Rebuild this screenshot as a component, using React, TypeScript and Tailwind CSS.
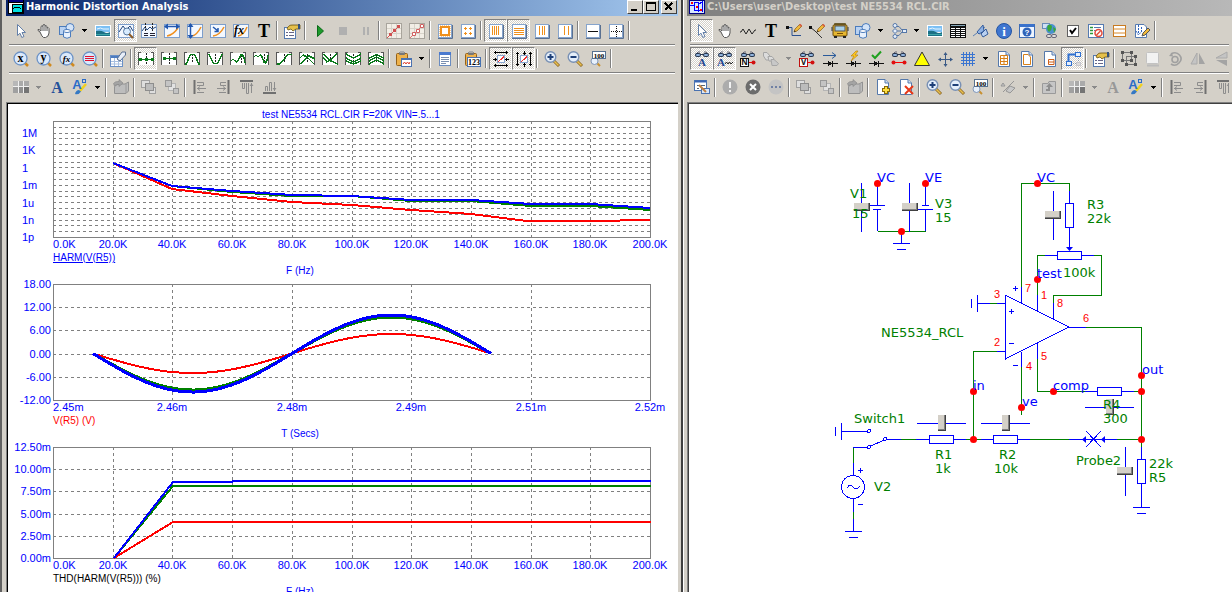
import React from 'react';

interface Tool {
  icon: string;
  label: string;
  pressed?: boolean;
  menu?: boolean;
  dim?: boolean;
}

type ToolItem = Tool | '|';

const BLUE = '#0000ff';
const GREEN = '#008000';
const RED = '#ff0000';
const GRAY = '#808080';

/* ---------- icons ---------- */

function Glasses() {
  return (
    <g>
      <path d="M2 3L4 1H6M14 3L12 1H10" fill="none" stroke="#667" />
      <rect x="1" y="2" width="6" height="4" rx="2" fill="#26364f" />
      <rect x="9" y="2" width="6" height="4" rx="2" fill="#26364f" />
      <path d="M6 3.5H10" stroke="#26364f" />
      <rect x="2" y="3" width="4" height="2" rx="1" fill="#8fb2dc" />
      <rect x="10" y="3" width="4" height="2" rx="1" fill="#8fb2dc" />
    </g>
  );
}

function PlotFrame({ children }: { children?: React.ReactNode }) {
  return (
    <g>
      <rect x="0.5" y="1.5" width="15" height="13" fill="#f3f8ff" stroke="#7d9ecb" />
      {children}
    </g>
  );
}

function OrangeFrame({ children }: { children?: React.ReactNode }) {
  return (
    <g>
      <path d="M1 15.5H15.5V2" stroke="#5a7090" fill="none" />
      <rect x="1.5" y="1.5" width="13" height="13" fill="#fff" stroke="#86a4cc" />
      {children}
    </g>
  );
}

function Lens({ children }: { children?: React.ReactNode }) {
  return (
    <g>
      <path d="M11 11L15 15" stroke="#d08a20" strokeWidth="2.5" />
      <circle cx="7.5" cy="7.5" r="6.5" fill="#dbe9fb" stroke="#6d93c6" strokeWidth="1.3" />
      {children}
    </g>
  );
}

function SmallLens({ children }: { children?: React.ReactNode }) {
  return (
    <g>
      <path d="M10 10L15 15" stroke="#8a6420" strokeWidth="3" />
      <path d="M10 10L14.5 14.5" stroke="#e8c050" strokeWidth="1.6" />
      <circle cx="6.5" cy="6" r="5.3" fill="#e4eefa" stroke="#7890b4" strokeWidth="1.4" />
      {children}
    </g>
  );
}

function Wave({ d, mark = 'M8.5 3V12' }: { d: string; mark?: string }) {
  return (
    <g shapeRendering="crispEdges">
      <rect x="0" y="2" width="16" height="12" fill="#fff" />
      <path d="M0.5 1V14M15.5 2V14" stroke="#555" />
      <path d="M0 1.5H3M13 1.5H16" stroke="#555" />
      <path d={mark} stroke="#222" strokeDasharray="2 1" />
      <path d={d} stroke="#0a7a1a" strokeWidth="1.4" fill="none" />
    </g>
  );
}

function Page({ children }: { children?: React.ReactNode }) {
  return (
    <g>
      <path d="M2.5 0.5H10L13.5 4V15.5H2.5Z" fill="#fff" stroke="#5579ab" />
      <path d="M10 0.5V4H13.5" fill="#cfe0f6" stroke="#5579ab" />
      {children}
    </g>
  );
}

function Pencil() {
  return (
    <g>
      <path d="M8 9L9 6L14 1L16 3L11 8Z" fill="#f0b93a" stroke="#8a5a10" strokeWidth="0.7" />
      <path d="M13 2L14.5 0.7L16 2.5L15 4Z" fill="#d8604a" />
      <path d="M8 9L8.6 7.2L9.8 8.4Z" fill="#222" />
    </g>
  );
}

function Clipboard({ children }: { children?: React.ReactNode }) {
  return (
    <g>
      <rect x="0.5" y="2.5" width="11" height="12" rx="1" fill="#eeb24c" stroke="#94611a" />
      <rect x="3" y="1" width="6" height="3" rx="1" fill="#777" />
      <rect x="4" y="0" width="4" height="2" fill="#aaa" />
      {children}
    </g>
  );
}

function Diode() {
  return (
    <g shapeRendering="crispEdges">
      <path d="M1 12.5H16" stroke="#111" />
      <path d="M6 9.5V15.5L10 12.5Z" fill="#111" />
      <path d="M10.5 9.5V15.5" stroke="#111" />
    </g>
  );
}

function BoxedLetter({ letter, color }: { letter: string; color: string }) {
  return (
    <g>
      <Glasses />
      <rect x="0.5" y="7.5" width="8" height="8" fill="#fff" stroke={color} />
      <text x="4.5" y="14" fontSize="8" fontWeight="bold" textAnchor="middle" fill="#111">
        {letter}
      </text>
      <path d="M9 11.5H13" stroke={RED} />
      <circle cx="13.5" cy="11.5" r="2" fill="#d01010" />
    </g>
  );
}

const ICONS: Record<string, React.ReactNode> = {
  cursor: <path d="M4.5 1.5V12.5L7 10.2L8.8 14.5L11 13.5L9 9.5H12.5Z" fill="#fff" stroke="#6480a8" />,
  hand: (
    <g>
      <path
        d="M4 9L2 7.5Q1.5 6 3 6.5L5 8V3.5Q6 2 7 3.5V2Q8 1 9 2V3Q10 2 11 3.5V5Q12.5 4 13 5.5V10Q12.5 14 9.5 14.5H7.5Q6 14 4 9Z"
        fill="#fff"
        stroke="#555"
      />
      <path d="M7 3.5V8M9 3V8M11 4.5V8" stroke="#555" fill="none" />
    </g>
  ),
  shapes: (
    <g stroke="#4c7cbc">
      <rect x="0.5" y="3.5" width="8" height="8" fill="#b9d2f2" />
      <circle cx="11" cy="4.5" r="4" fill="#d4e4f8" />
      <path d="M4.5 8V14Q8 16.5 11.5 14V8Z" fill="#e8f1fd" />
      <ellipse cx="8" cy="8" rx="3.5" ry="1.5" fill="#fff" />
    </g>
  ),
  image: (
    <g>
      <rect x="0" y="2" width="16" height="12" fill="#fff" />
      <rect x="1" y="3" width="14" height="6" fill="#7cc0f4" />
      <path d="M1 8Q6 7 9 9T15 9V13H1Z" fill="#1b7086" />
      <path d="M2 6Q6 4 8 6H14" stroke="#e8f6ff" fill="none" />
      <path d="M1 11.5H15" stroke="#3ea6a8" />
    </g>
  ),
  plotZoom: (
    <PlotFrame>
      <path d="M1 9L5 3L8 7L12 3L15 8" fill="none" stroke="#24477c" />
      <circle cx="9" cy="8.5" r="3.5" fill="#d8ecff" stroke="#55779f" />
      <path d="M11 11L15 15" stroke="#8c5a24" strokeWidth="2" />
    </PlotFrame>
  ),
  plotCursor: (
    <PlotFrame>
      <path d="M1 8L4 4L6 7L9 4L11 6L15 4" fill="none" stroke="#24477c" />
      <path d="M4.5 0V9M11.5 0V9" stroke="#222" strokeDasharray="2 1" />
      <path d="M3 10.5H7M9 10.5H14M3 12.5H7M9 12.5H14" stroke="#223" />
    </PlotFrame>
  ),
  plotH: (
    <PlotFrame>
      <path d="M3 13Q9 12 14 5" fill="none" stroke="#f09020" strokeWidth="1.5" />
      <path d="M1 3.5H15" fill="none" stroke="#2258b0" strokeWidth="1.5" />
      <path d="M0 3.5L4 0.5V6.5ZM16 3.5L12 0.5V6.5Z" fill="#2258b0" />
    </PlotFrame>
  ),
  plotV: (
    <PlotFrame>
      <path d="M5 13Q10 12 14 4" fill="none" stroke="#f09020" strokeWidth="1.5" />
      <path d="M3.5 1V15" fill="none" stroke="#2258b0" strokeWidth="1.5" />
      <path d="M3.5 0L0.5 4H6.5ZM3.5 16L0.5 12H6.5Z" fill="#2258b0" />
    </PlotFrame>
  ),
  plotArrow: (
    <PlotFrame>
      <path d="M3 13Q10 12 14 4" fill="none" stroke="#f09020" strokeWidth="1.5" />
      <path d="M3 4L8 8M8 5V8.500H4.500" fill="none" stroke="#2258b0" strokeWidth="1.5" />
    </PlotFrame>
  ),
  plotFx: (
    <PlotFrame>
      <path d="M5 13Q11 12 14 4" fill="none" stroke="#f09020" strokeWidth="1.5" />
      <text x="1" y="11" fontSize="12" fontStyle="italic" fontWeight="bold" fontFamily="Liberation Serif, serif">
        fx
      </text>
    </PlotFrame>
  ),
  text: (
    <text x="8" y="14" fontSize="18" fontWeight="bold" textAnchor="middle" fontFamily="Liberation Serif, serif">
      T
    </text>
  ),
  props: (
    <g>
      <rect x="0.5" y="4.5" width="11" height="11" fill="#fff" stroke="#557ab0" />
      <path d="M2 9.5H4M5 9.5H10M2 12.5H4M5 12.5H10" stroke="#668" />
      <path d="M3 5Q6 1 9 2H16V6H12L9 8L7 6L4 7Z" fill="#e5c04a" stroke="#6a5210" strokeWidth="0.8" />
      <rect x="14" y="1" width="2" height="5" fill="#33507c" />
    </g>
  ),
  play: <path d="M5.5 2.5L11.5 8L5.5 13.5Z" fill="#1d9a2c" stroke="#0a6a18" />,
  stop: <rect x="4" y="4" width="8" height="8" fill="#b0b0b0" />,
  pause: <path d="M6 4V12M10 4V12" stroke="#b0b0b0" strokeWidth="2" />,
  redLine: (
    <g>
      <rect x="0.5" y="0.5" width="15" height="15" fill="#f2eee6" stroke="#a8a49c" />
      <path d="M5.5 1V15M10.5 1V15M1 5.5H15M1 10.5H15" stroke="#d8d3ca" />
      <path d="M1 15L5 11L9 7L14 2" stroke="#d85050" fill="none" />
      <path d="M3 10h3v3h-3zM7 6h3v3h-3zM11 2h3v3h-3z" fill="#d05050" />
    </g>
  ),
  redMarks: (
    <g>
      <rect x="0.5" y="0.5" width="15" height="15" fill="#f2eee6" stroke="#a8a49c" />
      <path d="M5.5 1V15M10.5 1V15M1 5.5H15M1 10.5H15" stroke="#d8d3ca" />
      <path d="M1 15L5 11L10 6L14 2" stroke="#e07070" fill="none" />
      <path d="M3.5 9.5h3v3h-3zM7.5 6.5h3v3h-3zM11.5 1.5h3v3h-3z" fill="#fff" stroke="#d06060" />
    </g>
  ),
  orangeRect: (
    <OrangeFrame>
      <rect x="4" y="4" width="8" height="8" fill="#fff" stroke="#f0901c" strokeWidth="2" />
      <rect x="3" y="3" width="10" height="10" fill="none" stroke="#f0901c" strokeWidth="1" strokeDasharray="1 1" />
    </OrangeFrame>
  ),
  orangeDots: (
    <OrangeFrame>
      <path d="M4 5.5H7M5.5 4V7M9 5.5H12M10.5 4V7M4 10.5H7M5.5 9V12M9 10.5H12M10.5 9V12" stroke="#f0901c" />
    </OrangeFrame>
  ),
  bars4: (
    <OrangeFrame>
      <path d="M4.500 3V12M6.500 3V12M8.500 3V12M10.500 3V12" stroke="#f0901c" />
    </OrangeFrame>
  ),
  rows4: (
    <OrangeFrame>
      <path d="M3 5.5H13M3 7.5H13M3 9.5H13M3 11.5H13" stroke="#f0901c" />
    </OrangeFrame>
  ),
  bars3: (
    <OrangeFrame>
      <path d="M5.5 3V12M8.5 3V12M10.5 3V12" stroke="#f0901c" />
    </OrangeFrame>
  ),
  bars2: (
    <OrangeFrame>
      <path d="M7.5 3V12M11.5 3V12" stroke="#f0901c" />
    </OrangeFrame>
  ),
  hline: (
    <OrangeFrame>
      <path d="M3 8.5H13" stroke="#111" />
    </OrangeFrame>
  ),
  dotCross: (
    <OrangeFrame>
      <path d="M3 8.5H14M8.5 3V14" stroke="#111" strokeDasharray="1 1" />
    </OrangeFrame>
  ),
  lensX: (
    <Lens>
      <text x="7.5" y="11" fontSize="12" fontWeight="bold" textAnchor="middle" fontFamily="Liberation Serif, serif">
        x
      </text>
    </Lens>
  ),
  lensY: (
    <Lens>
      <text x="7.5" y="10" fontSize="12" fontWeight="bold" textAnchor="middle" fontFamily="Liberation Serif, serif">
        y
      </text>
    </Lens>
  ),
  lensFx: (
    <Lens>
      <text x="7.5" y="11" fontSize="9" fontWeight="bold" fontStyle="italic" textAnchor="middle" fontFamily="Liberation Serif, serif">
        fx
      </text>
    </Lens>
  ),
  lensRows: (
    <Lens>
      <path d="M3 5.5H12M3 7.5H12M3 9.5H12" stroke="#e01030" />
    </Lens>
  ),
  tableErase: (
    <g>
      <rect x="0.5" y="4.5" width="12" height="11" fill="#fff" stroke="#6a90c6" />
      <path d="M1 6H12" stroke="#4d7cc0" strokeWidth="2" />
      <path d="M4.5 7V15M8.5 7V15M1 10.5H12M1 13H12" stroke="#a9c0e0" />
      <path d="M7 8L12 1H15.5V4L10 10Z" fill="#e8eef8" stroke="#5a6f90" />
    </g>
  ),
  waveA: (
    <g shapeRendering="crispEdges">
      <rect x="0" y="2" width="16" height="12" fill="#fff" />
      <path d="M0.5 1V14M15.5 2V14M0 1.5H3M13 1.5H16" stroke="#555" />
      <path d="M8.5 2V14" stroke="#222" strokeDasharray="2 1" />
      <path d="M0 8.5H16" stroke="#0a7a1a" />
      <path d="M1 7h3v3h-3zM7 7h3v3h-3zM13 7h3v3h-3z" fill="#0a7a1a" />
    </g>
  ),
  waveB: (
    <g shapeRendering="crispEdges">
      <rect x="0" y="2" width="16" height="12" fill="#fff" />
      <path d="M0.5 1V14M15.5 2V14M0 1.5H3M13 1.5H16" stroke="#555" />
      <path d="M8.5 2V14" stroke="#222" strokeDasharray="2 1" />
      <path d="M2 7.5H15" stroke="#0a7a1a" />
      <path d="M2 6h3v3h-3zM12 6h3v3h-3z" fill="#0a7a1a" />
    </g>
  ),
  wavePeak: <Wave d="M1 13H2.500L5.500 5L7 3.500H10L11.500 5L14.500 13H16" />,
  waveValley: <Wave d="M2 3L5 10L7 12.500H10L12 10L15 3" />,
  waveHigh: <Wave d="M1 10L3 8L5 10L7 11L9 8L11 4H12.500L14 7L15 12" mark="M11.5 4V12" />,
  waveLow: <Wave d="M1 6L3 4L5 6L7 4L9 6L11 11L12.500 12L14 9L15 4" mark="M11.5 3V11" />,
  waveInflect: <Wave d="M1 13H4L12 3.500H16" />,
  waveTop: <Wave d="M1 7L4 4L8 6L15 13M1 13L10 5L16 8" />,
  waveBottom: <Wave d="M1 6L5 11L8 9L15 3M1 3L9 10L16 13" />,
  waveDown: <Wave d="M1 3L8.500 7L16 3M1 7L8.500 11L16 7M1 10L8.500 13L16 10" />,
  waveUp: <Wave d="M1 7L8.500 3.500L16 7M1 10L8.500 6L16 10M1 13L8.500 9L16 13" />,
  paste: (
    <Clipboard>
      <rect x="5.5" y="7.5" width="10" height="8" fill="#fff" stroke="#4a72b0" />
      <path d="M6 8.5H15" stroke="#4a72b0" />
      <path d="M7 13L8.5 11L10 13L11.5 11L13 13L14 11" fill="none" stroke="#e04030" />
    </Clipboard>
  ),
  list: (
    <g>
      <rect x="2.5" y="1.5" width="11" height="13" fill="#fff" stroke="#6a8cc0" />
      <rect x="2" y="1" width="12" height="3" fill="#4a7ad0" />
      <path d="M4 6.5H12M4 8.5H12M4 10.5H12M4 12.5H9" stroke="#7a8fb0" />
    </g>
  ),
  paste123: (
    <Clipboard>
      <rect x="2.5" y="6.5" width="13" height="9" fill="#fff" stroke="#4a72b0" />
      <text x="9" y="14" fontSize="8" fontWeight="bold" textAnchor="middle" fontFamily="Liberation Serif, serif">
        123
      </text>
    </Clipboard>
  ),
  scaleX: (
    <g shapeRendering="crispEdges">
      <path d="M1 1.5H15M1 14.5H15M0 8.5H4M12 8.5H16M2.5 0V3M13.5 0V3M2.5 13V16M13.5 13V16M2.5 7V10M13.5 7V10" stroke="#000" />
      <rect x="4.5" y="4.5" width="7" height="7" fill="#fff" stroke="#8aa6d0" />
      <path d="M5 10.5L8 8.5L11 5.5" fill="none" stroke="#f03030" />
    </g>
  ),
  scaleY: (
    <g shapeRendering="crispEdges">
      <path d="M1.5 1V15M14.5 1V15M8.5 0V4M8.5 12V16M0 2.5H3M0 13.5H3M13 2.5H16M13 13.5H16M7 2.5H10M7 13.5H10" stroke="#000" />
      <rect x="4.5" y="4.5" width="7" height="7" fill="#fff" stroke="#8aa6d0" />
      <path d="M5 10.5L8 8.5L11 5.5" fill="none" stroke="#f03030" />
    </g>
  ),
  zoomIn: (
    <SmallLens>
      <path d="M3.5 6H9.5M6.5 3V9" stroke="#1d3f78" strokeWidth="2" />
    </SmallLens>
  ),
  zoomOut: (
    <SmallLens>
      <path d="M3.5 6H9.5" stroke="#1d3f78" strokeWidth="2" />
    </SmallLens>
  ),
  zoom100: (
    <g>
      <path d="M7 12L10 15" stroke="#c89030" strokeWidth="2" />
      <circle cx="4.5" cy="10" r="3.5" fill="#e8f1fc" stroke="#8096b8" />
      <rect x="2.5" y="0.5" width="13" height="7" fill="#fff" stroke="#56708f" />
      <text x="9" y="6.5" fontSize="7" fontWeight="bold" textAnchor="middle" fontFamily="Liberation Serif, serif">
        100
      </text>
    </g>
  ),
  swatch: (
    <g>
      <rect x="0" y="2" width="16" height="12" fill="#f0f0f0" />
      <path d="M0 2h5v5h-5z" fill="#b8b8b8" />
      <path d="M6 2h4v5h-4zM11 2h5v5h-5z" fill="#aaaaaa" />
      <path d="M0 8h5v6h-5z" fill="#a0a0a0" />
      <path d="M6 8h4v6h-4z" fill="#909090" />
      <path d="M11 8h5v6h-5z" fill="#747474" />
    </g>
  ),
  fontA: (
    <text x="8" y="14" fontSize="16" fontWeight="bold" fill="#24509a" textAnchor="middle" fontFamily="Liberation Serif, serif">
      A
    </text>
  ),
  fontAGray: (
    <text x="8" y="14" fontSize="16" fontWeight="bold" fill="#989898" textAnchor="middle" fontFamily="Liberation Serif, serif">
      A
    </text>
  ),
  fontBrush: (
    <g>
      <path d="M14 5L8 12" stroke="#f0d020" strokeWidth="2.5" />
      <path d="M3 15Q4 11 7 11L9 12.500Q7 16 3 15Z" fill="#3478c4" />
      <text x="5" y="10" fontSize="13" fontWeight="bold" fill="#2a6cc8" textAnchor="middle" fontFamily="Liberation Sans, sans-serif">
        A
      </text>
      <rect x="10.5" y="0.5" width="3" height="3" fill="none" stroke="#2a6cc8" />
    </g>
  ),
  importGray: (
    <g>
      <path d="M1.500 7.500L5 5H12L15.500 3V12L13 14.500H1.500Z" fill="#bdbdbd" stroke="#929292" />
      <path d="M13 5V14" stroke="#9a9a9a" />
      <path d="M0.500 4.500Q2 2 6 2.500V0.500L10 4L6 7.500V5.500Q3 5 1.500 7Z" fill="#a4a4a4" stroke="#858585" strokeWidth="0.6" />
    </g>
  ),
  exportGray: (
    <g>
      <path d="M1.5 4.5H7L8 2.5H14.5V14.5H1.5Z" fill="#c6c6c6" stroke="#9a9a9a" />
      <path d="M5 12H9V8H12L8.5 4L5 8H7V10H5Z" fill="#8e8e8e" />
    </g>
  ),
  front: (
    <g stroke="#a0a0a0" fill="#dedede">
      <rect x="0.5" y="1.5" width="8" height="7" />
      <rect x="8.5" y="8.5" width="6" height="6" />
      <rect x="4.5" y="4.5" width="8" height="7" fill="#bcbcbc" stroke="#8d8d8d" />
    </g>
  ),
  back: (
    <g stroke="#989898" fill="#c4c4c4">
      <rect x="4.5" y="4.5" width="7" height="7" fill="#e2e2e2" stroke="#b4b4b4" />
      <rect x="1.5" y="1.5" width="6" height="6" />
      <rect x="9.5" y="9.5" width="5" height="5" />
    </g>
  ),
  alignL: (
    <g fill="none" stroke="#8d8d8d">
      <path d="M2.5 1V15" stroke="#707070" strokeWidth="2" />
      <path d="M5 3.5H11.500V6.500H5M14 9.500H5M8 7.500L5.500 9.500L8 11.500M5 13.500H12" />
    </g>
  ),
  alignR: (
    <g fill="none" stroke="#8d8d8d">
      <path d="M13.5 1V15" stroke="#707070" strokeWidth="2" />
      <path d="M11 3.5H5.500V6.500H11M2 9.500H11M8 7.500L10.500 9.500L8 11.500M11 13.500H4" />
    </g>
  ),
  alignT: (
    <g fill="none" stroke="#8d8d8d">
      <path d="M2 2H15" stroke="#707070" strokeWidth="2" />
      <path d="M4.5 4V9.500H6.500V4M8.500 4V14.500H10.500V4M13.500 14V4M12 7L13.500 5L15 7" />
    </g>
  ),
  alignB: (
    <g fill="none" stroke="#8d8d8d">
      <path d="M2 14H15" stroke="#707070" strokeWidth="2" />
      <path d="M4.5 12V7.500H6.500V12M8.500 12V3.500H10.500V12M13.500 3V12M12 9L13.500 11L15 9" />
    </g>
  ),
  zigzag: <path d="M0 9H1L3 6L6 11L9 6L12 11L15 7H16" fill="none" stroke="#222" />,
  wirePencil: (
    <g>
      <path d="M1 4.5H6V12.5H15" fill="none" stroke="#2a5090" />
      <rect x="0" y="3" width="3" height="3" fill="#111" />
      <Pencil />
    </g>
  ),
  diagPencil: (
    <g>
      <path d="M1 4L6 8L13 15" fill="none" stroke="#333" />
      <rect x="0" y="3" width="3" height="3" fill="#111" />
      <Pencil />
    </g>
  ),
  bus: (
    <g>
      <rect x="2" y="0" width="12" height="3" rx="1" fill="#6a5c30" />
      <rect x="1" y="2" width="14" height="11" rx="1" fill="#e8b830" stroke="#6a4a08" />
      <rect x="3" y="3" width="10" height="5" fill="#a8d0e8" stroke="#555" />
      <path d="M5 10.5H11" stroke="#7a5008" />
      <path d="M2 13h3v2h-3zM11 13h3v2h-3z" fill="#222" />
      <path d="M0 4V8M16 4V8" stroke="#333" />
    </g>
  ),
  flow: (
    <g fill="#e6effb" stroke="#5577a8">
      <path d="M4 6V10M6 3.5H8L11 7M6 12.5H8L11 9M6.500 8H10" fill="none" />
      <circle cx="4" cy="2.500" r="2" />
      <circle cx="4" cy="13.500" r="2" />
      <path d="M4 5.5L6.5 8L4 10.5L1.5 8Z" />
      <rect x="11.5" y="6.5" width="4" height="3" />
    </g>
  ),
  table: (
    <g shapeRendering="crispEdges">
      <rect x="0" y="1" width="16" height="14" fill="#111" />
      <path d="M1 2.5H15" stroke="#8ab" />
      <path d="M1 5.5H15M1 7.5H15M1 9.5H15M1 11.5H15M1 13.5H15" stroke="#fff" />
      <path d="M5.5 3V15M10.5 3V15" stroke="#111" />
    </g>
  ),
  ribbon: (
    <g>
      <path d="M0 13L12 4" stroke="#5a7fb5" />
      <path d="M4 9L10 2L11 8L6 11Z" fill="#8fb2e4" stroke="#345c9c" />
      <path d="M8 11L13 6L15 11L10 14Z" fill="#b9d0f0" stroke="#345c9c" />
    </g>
  ),
  ribbonGray: (
    <g stroke="#969696" fill="#c8c8c8">
      <path d="M3 13L14 2" />
      <path d="M1 7L3 4L5 7ZM6 12L10 7L15 9L10 14Z" />
    </g>
  ),
  info: (
    <g>
      <circle cx="8" cy="8" r="7.5" fill="#3f76d0" stroke="#2455a4" />
      <text x="8" y="13" fontSize="13" fontWeight="bold" fill="#fff" textAnchor="middle" fontFamily="Liberation Serif, serif">
        i
      </text>
    </g>
  ),
  help: (
    <g>
      <rect x="0.5" y="1.5" width="15" height="13" fill="#eef5ff" stroke="#3e6cb4" />
      <rect x="1" y="1" width="14" height="3" fill="#3a72cc" />
      <circle cx="8" cy="9" r="4.5" fill="#2e62b8" />
      <text x="8" y="12" fontSize="8" fontWeight="bold" fill="#fff" textAnchor="middle" fontFamily="Liberation Sans, sans-serif">
        ?
      </text>
    </g>
  ),
  globe: (
    <g>
      <rect x="0.5" y="0.5" width="7" height="5" fill="#cfe0f4" stroke="#6a8cb8" />
      <circle cx="9" cy="6" r="5" fill="#4a90d0" />
      <path d="M6 2Q10 1 10 4T7 9Q4 6 6 2ZM11 4L14 6L12 10Z" fill="#38a838" />
      <rect x="4.5" y="11.5" width="5" height="3" rx="1.5" fill="#ddd" stroke="#667" />
      <rect x="9.5" y="11.5" width="5" height="3" rx="1.5" fill="#ddd" stroke="#667" />
    </g>
  ),
  formX: (
    <g>
      <rect x="0.5" y="1.5" width="15" height="13" fill="#fff" stroke="#557ab0" />
      <path d="M2 4.5H5M2 7.5H5M2 10.5H5" stroke="#2a9a3a" strokeWidth="1.5" />
      <path d="M6 4.5H13M6 7.5H9" stroke="#557ab0" />
      <circle cx="10.5" cy="10" r="3.5" fill="#fff" stroke="#e04a3a" strokeWidth="1.5" />
      <path d="M8.5 12L12.5 8" stroke="#e04a3a" strokeWidth="1.5" />
    </g>
  ),
  orangeRows: (
    <g>
      <rect x="2.5" y="2.5" width="12" height="11" fill="#fff" stroke="#c87a20" />
      <path d="M2 6H15M2 10H15" stroke="#d88a2c" />
    </g>
  ),
  docPencil: (
    <g>
      <path d="M1.5 1.5H10L12.5 4V14.5H1.5Z" fill="#fff" stroke="#557ab0" />
      <path d="M4.5 2V11M7.5 4V9M2 8L4.5 12L8 8" stroke="#2a62c0" strokeDasharray="2 1" fill="none" />
      <path d="M8 13L9 10L14 5L16 7L11 12Z" fill="#f0b93a" stroke="#555" />
    </g>
  ),
  glassA: (
    <g>
      <Glasses />
      <text x="8" y="15" fontSize="11" fontWeight="bold" fill="#1f4690" textAnchor="middle" fontFamily="Liberation Serif, serif">
        A
      </text>
    </g>
  ),
  glassWave: (
    <g>
      <Glasses />
      <text x="4" y="15" fontSize="11" fontWeight="bold" fill="#1f4690" textAnchor="middle" fontFamily="Liberation Serif, serif">
        A
      </text>
      <path d="M8 13L9.5 11L11 13L12.5 11L14 13L16 11" fill="none" stroke="#222" />
    </g>
  ),
  glassN: <BoxedLetter letter="N" color="#111" />,
  glassV: <BoxedLetter letter="V" color="#c01010" />,
  stackGray: (
    <g fill="#dcdcdc" stroke="#a6a6a6">
      <path d="M0.5 1.5H4L7 5L5 6L7 9H3L0.500 5Z" />
      <path d="M5 5.5H9L11 8L9 10H6Z" />
      <path d="M8 8.5H11L15.5 12.500L14 14.5H9Z" fill="#c8c8c8" />
    </g>
  ),
  current: (
    <g>
      <Diode />
      <path d="M1 4.5H14M10 1.5L14 4.5L10 7.5" fill="none" stroke="#2a5a9a" />
    </g>
  ),
  power: (
    <g>
      <Diode />
      <path d="M11 0L6 5H9L6 10L13 4H10L13 0Z" fill="#ffc820" stroke="#b07808" strokeWidth="0.6" />
    </g>
  ),
  condition: (
    <g>
      <Diode />
      <path d="M4 4L7 7L13 0.5" fill="none" stroke="#1fa01f" strokeWidth="2" />
    </g>
  ),
  glassDots: (
    <g>
      <Glasses />
      <path d="M2 11.5H14" stroke={RED} />
      <circle cx="2.5" cy="11.5" r="2" fill="#e01010" />
      <circle cx="13.5" cy="11.5" r="2" fill="#e01010" />
    </g>
  ),
  triangle: <path d="M8 1L15.5 14.5H0.5Z" fill="#ffff00" stroke="#333" />,
  cross: (
    <g>
      <path d="M8.5 2V15M2 8.5H15" stroke="#3a5a86" />
      <path d="M8.5 1L6.500 4H10.500ZM8.500 16L6.500 13H10.500ZM1 8.500L4 6.500V10.500ZM16 8.500L13 6.500V10.500Z" fill="#3a5a86" />
    </g>
  ),
  grid: <path d="M3.5 1V15M6.5 1V15M9.5 1V15M12.5 1V15M1 3.5H15M1 6.5H15M1 9.5H15M1 12.5H15" stroke="#3a74d0" />,
  pageGrid: (
    <Page>
      <path d="M4.5 4.5H11.5V13.5H4.5ZM4 7.5H12M4 10.5H12M8 4V14" fill="none" stroke="#d88018" />
    </Page>
  ),
  page: (
    <Page>
      <path d="M4.5 3.5H9L11.5 6V13.5H4.5Z" fill="none" stroke="#d88018" />
    </Page>
  ),
  pageBox: (
    <Page>
      <path d="M6.5 8.5H12V13.5H6.5ZM7 11H12" fill="none" stroke="#d06018" />
    </Page>
  ),
  nodeMove: (
    <g>
      <path d="M3.5 10V3.5H11" fill="none" stroke="#3070d0" strokeWidth="2" />
      <rect x="10.5" y="1.5" width="5" height="4" fill="#e6effb" stroke="#3070d0" />
      <rect x="1.5" y="10.5" width="5" height="4" fill="#e6effb" stroke="#3070d0" />
      <path d="M8 12.5H12M13.5 7V11" stroke="#89a" strokeDasharray="1 1" />
      <rect x="11.5" y="11.5" width="4" height="3" fill="#ddd" stroke="#aab" strokeDasharray="1 1" />
    </g>
  ),
  selBox: (
    <g fill="none" stroke="#777">
      <rect x="1.5" y="1.5" width="9" height="8" />
      <rect x="5.5" y="5.5" width="9" height="8" />
      <path
        d="M0 0h3v3h-3zM9 0h3v3h-3zM0 8h3v3h-3zM9 8h3v3h-3zM13 4h3v3h-3zM13 12h3v3h-3zM4 12h3v3h-3z"
        fill="#555"
        stroke="none"
      />
    </g>
  ),
  whiteBox: (
    <g>
      <rect x="2.5" y="1.5" width="12" height="11" rx="1" fill="#f2f2f2" stroke="#c2c2c2" />
      <path d="M3 14.5H15" stroke="#bbb" strokeWidth="2" />
    </g>
  ),
  rotate: (
    <g fill="none" stroke="#a0a0a0" strokeWidth="1.6">
      <path d="M4 3Q9 0 12.5 4T12 12T4 13" />
      <circle cx="8" cy="8.5" r="3" />
      <path d="M2 5L5 1.5L6 5.5Z" fill="#a0a0a0" stroke="none" />
    </g>
  ),
  flipH: (
    <g fill="#a4a4a4">
      <path d="M7 2V13H1Z" fill="#c4c4c4" stroke="#aaa" />
      <path d="M9 2V13H15Z" />
    </g>
  ),
  flipV: (
    <g fill="#a4a4a4">
      <path d="M14 7V1L3 7Z" fill="#c4c4c4" stroke="#aaa" />
      <path d="M14 9V15L3 9Z" />
    </g>
  ),
  formPencil: (
    <g>
      <rect x="0.5" y="1.5" width="12" height="10" fill="#fff" stroke="#4a72b0" />
      <path d="M1 2.5H12" stroke="#3a66b4" strokeWidth="2" />
      <path d="M3 6.5H5M7 6.5H11M3 9.5H5" stroke="#567" />
      <rect x="7.5" y="9.5" width="8" height="5" fill="#dbe7f8" stroke="#4a72b0" />
      <path d="M5 6L12 13" stroke="#c08040" strokeWidth="2" />
    </g>
  ),
  exclaim: (
    <g>
      <circle cx="8" cy="8" r="7.5" fill="#acacac" />
      <path d="M8 3V9M8 11V13" stroke="#f2f2f2" strokeWidth="2" />
    </g>
  ),
  xCircle: (
    <g>
      <circle cx="8" cy="8" r="7.5" fill="#6c6c6c" />
      <path d="M5 5L11 11M11 5L5 11" stroke="#fff" strokeWidth="2" />
    </g>
  ),
  dots: (
    <g>
      <circle cx="8" cy="8" r="7.5" fill="#c4c4c4" />
      <path d="M3 7h2v2h-2zM7 7h2v2h-2zM11 7h2v2h-2z" fill="#6f80a4" />
    </g>
  ),
  pageAdd: (
    <Page>
      <path d="M11 7V15M7 11H15" stroke="#8a6a08" strokeWidth="4" />
      <path d="M11 8V14M8 11H14" stroke="#ffe040" strokeWidth="2" />
    </Page>
  ),
  pageDelete: (
    <Page>
      <path d="M7 7L15 15M15 7L7 15" stroke="#e83818" strokeWidth="2" />
    </Page>
  ),
};

function Icon({ name }: { name: string }) {
  return (
    <svg width="16" height="16" viewBox="0 0 16 16" className="shrink-0 overflow-visible" aria-hidden="true">
      {ICONS[name]}
    </svg>
  );
}

/* ---------- toolbars ---------- */

const DITHER = 'bg-[repeating-conic-gradient(#ffffff_0_25%,#d4d0c8_0_50%)] bg-[length:2px_2px]';

function ToolButton({ tool }: { tool: Tool }) {
  const pressed = tool.pressed
    ? `border border-t-[#808080] border-l-[#808080] border-r-white border-b-white ${DITHER}`
    : '';
  return (
    <>
      {tool.icon === 'check' ? (
        <label className="relative flex h-[23px] w-[23px] shrink-0 items-center justify-center">
          <input
            type="checkbox"
            defaultChecked
            aria-label={tool.label}
            className="peer h-3 w-3 appearance-none border border-[#606060] bg-white"
          />
          <svg width="8" height="8" viewBox="0 0 8 8" className="pointer-events-none absolute hidden peer-checked:block">
            <path d="M1 3L3 6L7 1" fill="none" stroke="#000" strokeWidth="2" />
          </svg>
        </label>
      ) : (
        <button
          type="button"
          aria-label={tool.label}
          aria-pressed={tool.pressed}
          className={`flex h-[23px] w-[23px] shrink-0 items-center justify-center ${pressed}`}
        >
          <Icon name={tool.icon} />
        </button>
      )}
      {tool.menu && (
        <button
          type="button"
          aria-label={`${tool.label} options`}
          className="flex h-[23px] w-[13px] shrink-0 items-center justify-center"
        >
          <svg width="5" height="3" viewBox="0 0 5 3" shapeRendering="crispEdges">
            <path d="M0 0H5L2.5 3Z" fill={tool.dim ? '#8a8a8a' : '#000'} />
          </svg>
        </button>
      )}
    </>
  );
}

function Toolbar({ items, label, last }: { items: ToolItem[]; label: string; last?: boolean }) {
  return (
    <div role="toolbar" aria-label={label} className="shrink-0 px-[3px]">
      <div
        className={`flex h-7 items-center overflow-hidden ${
          last ? '' : 'border-b border-[#808080] shadow-[0_1px_0_#ffffff]'
        }`}
      >
        {items.map((item, i) =>
          item === '|' ? (
            <span key={i} className="mr-[2px] ml-px h-[19px] w-[2px] shrink-0 border-r border-l border-r-white border-l-[#808080]" />
          ) : (
            <ToolButton key={i} tool={item} />
          )
        )}
      </div>
    </div>
  );
}

const t = (icon: string, label: string, extra: Partial<Tool> = {}): Tool => ({ icon, label, ...extra });

const analysisMain: ToolItem[] = [
  t('cursor', 'Select'), t('hand', 'Pan'), t('shapes', 'Shapes', { menu: true }), t('image', 'Picture'),
  t('plotZoom', 'Scale mode', { pressed: true }), t('plotCursor', 'Cursor mode'), t('plotH', 'Horizontal tag'),
  t('plotV', 'Vertical tag'), t('plotArrow', 'Point tag'), t('plotFx', 'Formula'), t('text', 'Text'), '|',
  t('props', 'Properties'), '|', t('play', 'Run'), t('stop', 'Stop'), t('pause', 'Pause'), '|',
  t('redLine', 'Tokens'), t('redMarks', 'Data points'), '|', t('orangeRect', 'Ruler'), t('orangeDots', 'Plus marks'), '|',
  t('bars4', 'Horizontal axis grids', { pressed: true }), t('rows4', 'Vertical axis grids', { pressed: true }),
  t('bars3', 'Minor log grids'), t('bars2', 'Minor grids'), '|', t('hline', 'Baseline'), t('dotCross', 'Horizontal cursor'), '|',
];

const analysisCursor: ToolItem[] = [
  t('lensX', 'Go to X'), t('lensY', 'Go to Y'), t('lensFx', 'Go to performance'), t('lensRows', 'Go to branch'), '|',
  t('tableErase', 'Clear table'), '|', t('waveA', 'Next simulation point', { pressed: true }), t('waveB', 'Next interpolated point'),
  t('wavePeak', 'Peak'), t('waveValley', 'Valley'), t('waveHigh', 'High'), t('waveLow', 'Low'), t('waveInflect', 'Inflection'),
  t('waveTop', 'Global high'), t('waveBottom', 'Global low'), t('waveDown', 'Bottom'), t('waveUp', 'Top'), '|',
  t('paste', 'Copy', { menu: true }), '|', t('list', 'Numeric output'), '|', t('paste123', 'Copy values'), '|',
  t('scaleX', 'Auto scale X', { pressed: true }), t('scaleY', 'Auto scale Y', { pressed: true }), '|',
  t('zoomIn', 'Zoom in'), t('zoomOut', 'Zoom out'), t('zoom100', 'Zoom 100%'), '|',
];

const analysisFormat: ToolItem[] = [
  t('swatch', 'Color', { menu: true, dim: true }), t('fontA', 'Font'), t('fontBrush', 'Format', { menu: true }), '|',
  t('importGray', 'Import'), '|', t('front', 'Bring to front'), t('back', 'Send to back'), '|',
  t('alignL', 'Align left'), t('alignR', 'Align right'), t('alignT', 'Align top'), t('alignB', 'Align bottom'),
];

const schematicMain: ToolItem[] = [
  t('cursor', 'Select', { pressed: true }), t('hand', 'Pan'), t('zigzag', 'Component'), t('text', 'Text'),
  t('wirePencil', 'Wire'), t('diagPencil', 'Diagonal wire'), t('bus', 'Bus'), t('shapes', 'Shapes', { menu: true }),
  t('flow', 'Flowchart', { menu: true }), t('image', 'Picture'), t('table', 'Table'), t('ribbon', 'Flag'), t('info', 'Info'),
  t('help', 'Help'), t('globe', 'Link'), t('check', 'Enable'), t('formX', 'Region enable'), t('orangeRows', 'Rows'),
  t('docPencil', 'Edit file'), '|',
];

const schematicView: ToolItem[] = [
  t('glassA', 'Show attributes', { pressed: true }), t('glassWave', 'Show grid text', { pressed: true }),
  t('glassN', 'Node numbers'), t('stackGray', 'Layers', { menu: true, dim: true }), t('glassV', 'Node voltages'),
  t('current', 'Currents'), t('power', 'Power'), t('condition', 'Conditions'), t('glassDots', 'Pin connections'),
  t('triangle', 'Warnings'), t('cross', 'Crosshair'), t('grid', 'Grid', { menu: true }), t('pageGrid', 'Border'),
  t('page', 'Page'), t('pageBox', 'Title block'), t('nodeMove', 'Rubberbanding', { pressed: true }), '|',
  t('props', 'Properties'), '|', t('selBox', 'Box select'), t('whiteBox', 'Mirror box'), t('rotate', 'Rotate'),
  t('flipH', 'Flip horizontal'), t('flipV', 'Flip vertical'),
];

const schematicFormat: ToolItem[] = [
  t('formPencil', 'Edit'), '|', t('exclaim', 'Error'), t('xCircle', 'Cancel'), t('dots', 'More'), '|',
  t('front', 'Bring to front'), t('back', 'Send to back'), '|', t('importGray', 'Import'), '|',
  t('pageAdd', 'Add page'), t('pageDelete', 'Delete page'), '|', t('zoomIn', 'Zoom in'), t('zoomOut', 'Zoom out'),
  t('zoom100', 'Zoom 100%'), '|', t('ribbonGray', 'Flags', { menu: true, dim: true }), '|', t('exportGray', 'Export'), '|',
  t('swatch', 'Color', { menu: true, dim: true }), t('fontAGray', 'Font'), t('fontBrush', 'Format', { menu: true }), '|',
  t('alignL', 'Align left'), t('alignR', 'Align right'), t('alignT', 'Align top'),
];

/* ---------- analysis plots ---------- */

const LEFT = 53;
const RIGHT = 650;
const KHZ_X = [113, 172, 232, 292, 352, 411, 471, 531, 590];
const KHZ_LABELS = ['0.0K', '20.0K', '40.0K', '60.0K', '80.0K', '100.0K', '120.0K', '140.0K', '160.0K', '180.0K', '200.0K'];

interface Trace {
  color: string;
  width: number;
  points: string;
}

interface PlotProps {
  top: number;
  bottom: number;
  rows: number[];
  cols: number[];
  xLabels: string[];
  yLabels: [number, string][];
  yLeft?: boolean;
  traces: Trace[];
  expression: string;
  expressionColor: string;
  underline?: boolean;
  axis: string;
}

function Plot({ top, bottom, rows, cols, xLabels, yLabels, yLeft, traces, expression, expressionColor, underline, axis }: PlotProps) {
  const ticks = [...cols, RIGHT];
  return (
    <g>
      <g stroke={GRAY} fill="none" shapeRendering="crispEdges">
        {rows.map((y) => (
          <path key={y} d={`M${LEFT} ${y + 0.5}H${RIGHT}`} strokeDasharray="3 3" />
        ))}
        {cols.map((x) => (
          <path key={x} d={`M${x + 0.5} ${top}V${bottom}`} strokeDasharray="3 3" />
        ))}
        <path d={`M${LEFT + 0.5} ${top + 0.5}H${RIGHT + 0.5}V${bottom + 0.5}H${LEFT + 0.5}Z`} />
      </g>
      {traces.map((trace) => (
        <polyline
          key={trace.color}
          points={trace.points}
          fill="none"
          stroke={trace.color}
          strokeWidth={trace.width}
          shapeRendering="crispEdges"
        />
      ))}
      <g fill={BLUE} fontSize="11">
        {yLabels.map(([y, label]) => (
          <text key={label} x={yLeft ? 22 : 51} y={y + 4} textAnchor={yLeft ? 'start' : 'end'}>
            {label}
          </text>
        ))}
        <text x={LEFT} y={bottom + 11}>{xLabels[0]}</text>
        {ticks.map((x, i) => (
          <text key={x} x={x} y={bottom + 11} textAnchor="middle">
            {xLabels[i + 1]}
          </text>
        ))}
      </g>
      <text x={LEFT} y={bottom + 24} fontSize="10" fill={expressionColor} textDecoration={underline ? 'underline' : undefined}>
        {expression}
      </text>
      <text x="300" y={bottom + 37} fontSize="10" fill={BLUE} textAnchor="middle">
        {axis}
      </text>
    </g>
  );
}

// one full period, starting on the falling half
function sine(amplitude: number) {
  const points: string[] = [];
  for (let x = 93; x <= 491; x += 3) {
    const y = 353.5 + amplitude * Math.sin(((x - 93) / 398) * Math.PI * 2);
    points.push(`${x},${y.toFixed(1)}`);
  }
  points.push('491,353.5');
  return points.join(' ');
}

const decadeRows = Array.from({ length: 19 }, (_, i) => Math.floor(121.5 + 5.8 * (i + 1)));

function AnalysisCanvas() {
  return (
    <svg
      width="670"
      height="488"
      viewBox="8 104 670 488"
      fontFamily="'Liberation Sans', Arial, sans-serif"
      className="block shrink-0 overflow-visible"
      role="img"
      aria-label="Harmonic distortion plots"
    >
      <text x="351" y="118" fontSize="10" fill={BLUE} textAnchor="middle">
        test NE5534 RCL.CIR F=20K VIN=.5...1
      </text>
      <Plot
        top={121}
        bottom={237}
        rows={decadeRows}
        cols={KHZ_X}
        xLabels={KHZ_LABELS}
        yLeft
        yLabels={[[133, '1M'], [150, '1K'], [168, '1'], [185, '1m'], [203, '1u'], [220, '1n'], [237, '1p']]}
        traces={[
          { color: RED, width: 2, points: '113,163 172,189 232,196 292,202 352,205 411,210 471,214 527,221 590,221 650,220' },
          { color: GREEN, width: 2, points: '113,163 172,186 232,192 292,196 352,196 411,201 471,201 531,206 590,206 650,210' },
          { color: BLUE, width: 2, points: '113,163 172,186 232,191 292,195 352,196 411,200 471,200 531,204 590,204 650,208' },
        ]}
        expression="HARM(V(R5))"
        expressionColor={BLUE}
        underline
        axis="F (Hz)"
      />
      <Plot
        top={284}
        bottom={400}
        rows={[307, 330, 354, 377]}
        cols={[172, 292, 411, 531]}
        xLabels={['2.45m', '2.46m', '2.48m', '2.49m', '2.51m', '2.52m']}
        yLabels={[[284, '18.00'], [307, '12.00'], [330, '6.00'], [354, '0.00'], [377, '-6.00'], [400, '-12.00']]}
        traces={[
          { color: RED, width: 2, points: sine(19.5) },
          { color: GREEN, width: 3, points: sine(36.5) },
          { color: BLUE, width: 3, points: sine(38.5) },
        ]}
        expression="V(R5) (V)"
        expressionColor={RED}
        axis="T (Secs)"
      />
      <Plot
        top={447}
        bottom={558}
        rows={[469, 491, 514, 536]}
        cols={KHZ_X}
        xLabels={KHZ_LABELS}
        yLabels={[[447, '12.50m'], [469, '10.00m'], [491, '7.50m'], [514, '5.00m'], [536, '2.50m'], [558, '0.00m']]}
        traces={[
          { color: RED, width: 2, points: '114,558 173,522 651,522' },
          { color: GREEN, width: 2, points: '114,558 173,486 651,486' },
          { color: BLUE, width: 2, points: '114,558 173,482 232,482 233,481 651,481' },
        ]}
        expression="THD(HARM(V(R5))) (%)"
        expressionColor="#000000"
        axis="F (Hz)"
      />
    </svg>
  );
}

/* ---------- schematic ---------- */

function Knob({ x, y, vertical }: { x: number; y: number; vertical?: boolean }) {
  const w = vertical ? 8 : 16;
  const h = vertical ? 16 : 8;
  return (
    <g>
      <rect x={x} y={y} width={w} height={h} fill="#404040" />
      <rect x={x} y={y} width={w - 1} height={h - 1} fill="#808080" />
      <rect x={x} y={y} width={w - 2} height={h - 2} fill="#d4d0c8" />
    </g>
  );
}

const greenWires =
  'M877.5 231.5H925.5 M1021.5 290V183.5H1069.5V191 M1045 255.5H1037.5V295 M1094 255.5H1101.5V295.5H1053.5V303 ' +
  'M990 303.5H997 M997 351.5H973.5V439.5 M1086 327.5H1141.5V447 M1021.5 367V415 M1037.5 359V391.5H1085 M1134 391.5H1141 ' +
  'M853.5 447V463 M853.5 512V519 M901 439.5H916 M966 439.5H981 M1030 439.5H1069 M1117 439.5H1141';

const blueWires =
  // supplies V1 and V3
  'M861.5 183V232 M877.5 183V205 M870 205.5H885 M873 209.5H881 M877.5 210V231 ' +
  'M909.5 183V232 M925.5 183V205 M922 205.5H929 M918 209.5H933 M925.5 210V231 ' +
  'M901.5 231V243 M893 243.5H910 M897 249.5H906 ' +
  // R3 and trimmer
  'M1069.5 191V203 M1065.5 203.5H1073.5V227.5H1065.5Z M1069.5 228V250 M1053.5 191V240 ' +
  'M1057.5 251.5H1081.5V259.5H1057.5Z M1045 255.5H1057 M1082 255.5H1094 ' +
  // op-amp pins
  'M1021.5 287V303 M1037.5 295V311 M1053.5 303V319 M1069 327.5H1086 M971.5 299V308 M977.5 295V312 M977 303.5H990 ' +
  'M997 303.5H1005 M997 351.5H1005 M1021.5 352V367 M1037.5 343V359 M1005.5 295V360 ' +
  'M1013 288.5H1018 M1015.5 286V291 M1009 311.5H1014 M1011.5 309V314 M1009 343.5H1014 M1013 365.5H1018 ' +
  // switch and V2
  'M835.5 427V436 M841.5 423V440 M841 431.5H868 M853 447.5H868 M853.5 463V475 M853.5 499V512 M853.5 519V531 ' +
  'M845 531.5H862 M849 537.5H858 M858 470.5H863 M860.5 468V473 M858 504.5H863 ' +
  // R1, R2, R4, R5
  'M886 439.5H901 M916 439.5H929 M929.5 435.5H953.5V443.5H929.5Z M954 439.5H966 M917 423.5H966 ' +
  'M981 439.5H993 M993.5 435.5H1017.5V443.5H993.5Z M1018 439.5H1030 M981 423.5H1030 M1069 439.5H1117 ' +
  'M1085 391.5H1097 M1097.5 387.5H1121.5V395.5H1097.5Z M1122 391.5H1134 M1085 407.5H1134 ' +
  'M1141.5 447V459 M1137.5 459.5H1145.5V483.5H1137.5Z M1141.5 484V507 M1133 507.5H1150 M1137 513.5H1146 M1125.5 447V496';

const joints = [
  [877, 183], [925, 183], [901, 231], [1037, 183], [1037, 279], [1141, 375], [1141, 391],
  [1141, 439], [973, 391], [973, 439], [1021, 407], [1053, 391],
];

const partLabels: [number, number, string][] = [
  [850, 198, 'V1'], [852, 218, '15'], [935, 208, 'V3'], [935, 222, '15'], [1087, 209, 'R3'], [1087, 223, '22k'],
  [1063, 277, '100k'], [881, 337, 'NE5534_RCL'], [854, 423, 'Switch1'], [874, 491, 'V2'], [935, 459, 'R1'],
  [935, 473, '1k'], [999, 459, 'R2'], [994, 473, '10k'], [1103, 409, 'R4'], [1103, 423, '300'], [1076, 465, 'Probe2'],
  [1149, 468, '22k'], [1149, 482, 'R5'],
];

const nodeLabels: [number, number, string][] = [
  [877, 182, 'VC'], [925, 182, 'VE'], [1037, 182, 'VC'], [1037, 278, 'test'], [1142, 374, 'out'],
  [973, 390, 'in'], [1022, 406, 've'], [1053, 390, 'comp'],
];

const pinLabels: [number, number, string][] = [
  [1025, 292, '7'], [1041, 299, '1'], [1057, 307, '8'], [994, 298, '3'],
  [994, 346, '2'], [1026, 370, '4'], [1041, 360, '5'], [1083, 322, '6'],
];

function SchematicCanvas() {
  return (
    <svg
      width="544"
      height="488"
      viewBox="689 104 544 488"
      fontFamily="'DejaVu Sans', Verdana, sans-serif"
      className="block shrink-0"
      role="img"
      aria-label="NE5534 circuit schematic"
    >
      <g fill="none" shapeRendering="crispEdges">
        <path d={greenWires} stroke={GREEN} />
        <path d={blueWires} stroke={BLUE} />
        <path d="M1005 295L1069 327L1005 359" stroke={BLUE} />
        <path d="M1086 431L1101 447M1101 431L1086 447" stroke={BLUE} />
        <path d="M871 446L884 440" stroke={BLUE} />
        <circle cx="853" cy="487" r="11.5" stroke={BLUE} />
        <path d="M847 488Q850 483 853 487T860 486" stroke={BLUE} />
        <circle cx="869" cy="431" r="1.5" stroke={BLUE} />
        <circle cx="869" cy="447" r="1.5" stroke={BLUE} />
        <circle cx="885" cy="439" r="1.5" stroke={BLUE} />
      </g>
      <path d="M1066 247H1073L1069.5 251ZM1086 436V443L1082 439.5ZM1105 436V443L1101 439.5Z" fill={BLUE} />
      <Knob x={854} y={203} />
      <Knob x={902} y={203} />
      <Knob x={1045} y={211} />
      <Knob x={1117} y={467} />
      <Knob x={938} y={415} vertical />
      <Knob x={1002} y={415} vertical />
      <Knob x={1106} y={399} vertical />
      <g fill={RED}>
        {joints.map(([x, y]) => (
          <circle key={`${x}-${y}`} cx={x + 0.5} cy={y + 0.5} r="3.5" />
        ))}
      </g>
      <g fontSize="13" fill={GREEN}>
        {partLabels.map(([x, y, label]) => (
          <text key={`${x}-${y}`} x={x} y={y}>{label}</text>
        ))}
      </g>
      <g fontSize="13" fill={BLUE}>
        {nodeLabels.map(([x, y, label]) => (
          <text key={`${x}-${y}`} x={x} y={y}>{label}</text>
        ))}
      </g>
      <g fontSize="11" fill={RED} fontFamily="'Liberation Sans', Arial, sans-serif">
        {pinLabels.map(([x, y, label]) => (
          <text key={`${x}-${y}`} x={x} y={y}>{label}</text>
        ))}
      </g>
    </svg>
  );
}

/* ---------- windows ---------- */

function CaptionButton({ label, children }: { label: string; children: React.ReactNode }) {
  return (
    <button
      type="button"
      aria-label={label}
      className="h-[14px] w-4 border border-t-white border-r-[#404040] border-b-[#404040] border-l-white bg-[#d4d0c8]"
    >
      <svg width="14" height="12" viewBox="0 0 14 12" shapeRendering="crispEdges" className="block">
        {children}
      </svg>
    </button>
  );
}

function AnalysisWindow() {
  return (
    <section className="flex min-w-0 flex-col border-r-2 border-l-2 border-r-[#404040] border-l-[#606060] bg-[#d4d0c8] pr-[3px] pl-1">
      <header className="flex h-4 shrink-0 items-start bg-linear-to-r from-[#0a246a] to-[#a6caf0] pr-px pl-[2px]">
        <svg width="16" height="16" viewBox="0 0 16 16" className="shrink-0" shapeRendering="crispEdges">
          <rect x="0" y="0" width="16" height="14" fill="#000" />
          <rect x="1" y="3" width="14" height="10" fill="#fff" />
          <rect x="1" y="0" width="14" height="2" fill="#00007f" />
          <rect x="4" y="4" width="10" height="8" fill="#00e0e0" stroke="#000" />
          <path d="M5 9L7 7H11L13 9" stroke="#000" fill="none" />
        </svg>
        <h1 className="ml-[2px] flex-1 truncate font-['DejaVu_Sans_Condensed','DejaVu_Sans',sans-serif] text-[11px] leading-[14px] font-bold text-white">
          Harmonic Distortion Analysis
        </h1>
        <div className="flex">
          <CaptionButton label="Minimize">
            <rect x="3" y="8" width="6" height="2" />
          </CaptionButton>
          <CaptionButton label="Maximize">
            <path d="M2.5 1.5H11.5V9.5H2.5ZM2 2.5H12" fill="none" stroke="#000" />
          </CaptionButton>
          <span className="w-[2px]" />
          <CaptionButton label="Close">
            <path d="M3 2L10 9M10 2L3 9" stroke="#000" strokeWidth="1.5" />
          </CaptionButton>
        </div>
      </header>
      <div className="h-px shrink-0" />
      <Toolbar items={analysisMain} label="Analysis tools" />
      <Toolbar items={analysisCursor} label="Cursor tools" />
      <Toolbar items={analysisFormat} label="Format tools" last />
      <div className="mt-px min-h-0 flex-1 overflow-hidden border-t border-l border-[#808080]">
        <div className="h-full overflow-hidden border-t border-l border-black bg-white">
          <AnalysisCanvas />
        </div>
      </div>
    </section>
  );
}

function SchematicWindow() {
  return (
    <section className="flex min-w-0 flex-col overflow-hidden border-l border-white bg-[#d4d0c8] pl-[3px]">
      <header className="flex h-4 shrink-0 items-start bg-linear-to-r from-[#808080] to-[#b8b8b8] pl-[2px]">
        <svg width="16" height="16" viewBox="0 0 16 16" className="shrink-0" shapeRendering="crispEdges">
          <rect x="0" y="0" width="16" height="14" fill="#000080" />
          <rect x="1" y="1" width="14" height="12" fill="#d8e8ff" />
          <path d="M1 5H5V2H9V12M5 5V10H12M9 5L13 2V12" stroke="#0000ff" fill="none" />
          <path d="M2 2h2v2h-2zM7 6h2v2h-2zM11 9h2v2h-2z" fill="#ff0000" />
        </svg>
        <h2 className="ml-[2px] truncate font-['DejaVu_Sans_Condensed','DejaVu_Sans',sans-serif] text-[11px] leading-[14px] font-bold text-[#d4d0c8]">
          C:\Users\user\Desktop\test NE5534 RCL.CIR
        </h2>
      </header>
      <div className="h-px shrink-0" />
      <Toolbar items={schematicMain} label="Schematic tools" />
      <Toolbar items={schematicView} label="View tools" />
      <Toolbar items={schematicFormat} label="Page tools" last />
      <div className="mt-px min-h-0 flex-1 overflow-hidden border-t border-l border-[#808080]">
        <div className="h-full overflow-hidden border-t border-l border-[#404040] bg-white">
          <SchematicCanvas />
        </div>
      </div>
    </section>
  );
}

export default function App() {
  return (
    <main className="grid h-screen grid-cols-[683fr_549fr] overflow-hidden bg-[#d4d0c8]">
      <AnalysisWindow />
      <SchematicWindow />
    </main>
  );
}
